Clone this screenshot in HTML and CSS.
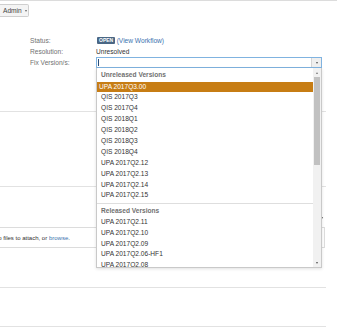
FILE: index.html
```html
<!DOCTYPE html>
<html>
<head>
<meta charset="utf-8">
<link rel="stylesheet" href="styles.css">
</head>
<body>
<div class="page">
  <div class="toolbar">
    <button class="btn">Admin <span class="caret"></span></button>
  </div>
  <div class="fields">
    <div class="row">
      <div class="label">Status:</div>
      <div class="value"><span class="badge">OPEN</span><a class="link">(View Workflow)</a></div>
    </div>
    <div class="row">
      <div class="label">Resolution:</div>
      <div class="value">Unresolved</div>
    </div>
    <div class="row">
      <div class="label">Fix Version/s:</div>
      <div class="value">
        <div class="input">
          <span class="cursor"></span>
          <span class="input-arrow"><span class="tri-down"></span></span>
        </div>
        <div class="dropdown">
          <div class="list">
            <div class="group">
              <div class="group-head">Unreleased Versions</div>
              <div class="item active">UPA 2017Q3.00</div>
              <div class="item">QIS 2017Q3</div>
              <div class="item">QIS 2017Q4</div>
              <div class="item">QIS 2018Q1</div>
              <div class="item">QIS 2018Q2</div>
              <div class="item">QIS 2018Q3</div>
              <div class="item">QIS 2018Q4</div>
              <div class="item">UPA 2017Q2.12</div>
              <div class="item">UPA 2017Q2.13</div>
              <div class="item">UPA 2017Q2.14</div>
              <div class="item">UPA 2017Q2.15</div>
            </div>
            <div class="group group-sep">
              <div class="group-head">Released Versions</div>
              <div class="item">UPA 2017Q2.11</div>
              <div class="item">UPA 2017Q2.10</div>
              <div class="item">UPA 2017Q2.09</div>
              <div class="item">UPA 2017Q2.06-HF1</div>
              <div class="item">UPA 2017Q2.08</div>
            </div>
          </div>
          <div class="scrollbar">
            <div class="sb-btn"><span class="tri-up"></span></div>
            <div class="sb-thumb"></div>
            <div class="sb-track"></div>
            <div class="sb-btn"><span class="tri-down"></span></div>
          </div>
        </div>
      </div>
    </div>
  </div>
  <div class="block b1"></div>
  <div class="block b2"></div>
  <div class="select-row"><span class="tri-down small"></span></div>
  <div class="attach"><span>Drop files to attach, or <a class="link">browse</a>.</span></div>
  <div class="gap"></div>
  <div class="comment"></div>
</div>
</body>
</html>
```
FILE: styles.css
```css
* { box-sizing: border-box; }
body {
  margin: 0;
  font-family: "Liberation Sans", Arial, sans-serif;
  font-size: 6.6px;
  color: #333;
  background: #fff;
}
.page {
  width: 337px;
  height: 332px;
  overflow: hidden;
}
.toolbar {
  border-top: 1px solid #dcdcdc;
  padding-top: 3px;
  height: 35px;
}
.btn {
  height: 13px;
  padding: 0 3px 0 3px;
  border: 1px solid #cfcfcf;
  border-left: none;
  border-radius: 0 2px 2px 0;
  background: #f4f4f4;
  font-family: inherit;
  font-size: 6.6px;
  font-weight: normal;
  color: #444;
  display: inline-flex;
  align-items: center;
  gap: 3px;
  width: 29px;
}
.caret {
  width: 0; height: 0;
  border-left: 1.5px solid transparent;
  border-right: 1.5px solid transparent;
  border-top: 2px solid #666;
}
.fields { display: flex; flex-direction: column; }
.row {
  display: flex;
  height: 11px;
  align-items: center;
  padding-right: 15px;
}
.label {
  width: 96px;
  padding-left: 30px;
  color: #707070;
  flex: none;
}
.value {
  flex: 1;
  position: relative;
  display: flex;
  align-items: center;
  gap: 1.5px;
  height: 11px;
}
.badge {
  background: #4a6785;
  color: #fff;
  font-weight: bold;
  font-size: 5px;
  height: 6.5px;
  line-height: 6.5px;
  padding: 0 2px;
  border-radius: 1px;
  margin-left: 1px;
}
.link { color: #3b73af; }
.input {
  width: 100%;
  height: 11px;
  border: 1px solid #80b3e0;
  display: flex;
  align-items: center;
  background: #fff;
}
.cursor {
  width: 1px;
  height: 7px;
  background: #2a4f7a;
  margin-left: 1px;
}
.input-arrow {
  margin-left: auto;
  width: 10px;
  height: 100%;
  border-left: 1px solid #d5d5d5;
  background: #efefef;
  display: flex;
  align-items: center;
  justify-content: center;
}
.tri-down {
  width: 0; height: 0;
  border-left: 1.5px solid transparent;
  border-right: 1.5px solid transparent;
  border-top: 2px solid #555;
}
.tri-up {
  width: 0; height: 0;
  border-left: 1.5px solid transparent;
  border-right: 1.5px solid transparent;
  border-bottom: 2px solid #777;
}
.dropdown {
  position: absolute;
  top: 11px;
  left: 0;
  right: 0;
  height: 200px;
  border: 1px solid #c9c9c9;
  border-top: none;
  background: #fff;
  display: flex;
  box-shadow: 0 1px 3px rgba(0,0,0,0.12);
  z-index: 5;
}
.list {
  flex: 1;
  overflow: hidden;
}
.group { padding-bottom: 1.5px; }
.group-sep { border-top: 1px solid #dedede; }
.group-head {
  height: 13.5px;
  line-height: 13.5px;
  padding-left: 4px;
  color: #707070;
  font-weight: bold;
}
.group-sep .group-head { height: 13px; line-height: 13px; }
.item {
  height: 10.9px;
  line-height: 10.9px;
  padding-left: 4px;
  white-space: nowrap;
}
.item.active {
  background: #c77d14;
  color: #fff;
  padding-left: 2px;
}
.scrollbar {
  width: 8px;
  background: #f1f1f1;
  display: flex;
  flex-direction: column;
}
.sb-btn {
  height: 9px;
  display: flex;
  align-items: center;
  justify-content: center;
}
.sb-thumb {
  height: 88px;
  margin: 0 1px;
  background: #c1c1c1;
}
.sb-track { flex: 1; }
.block { width: 326px; border-bottom: 1px solid #e2e2e2; }
.b1 { height: 44px; }
.b2 { height: 75px; }
.select-row {
  width: 325px;
  height: 40px;
  display: flex;
  justify-content: flex-end;
  align-items: center;
  padding-right: 2px;
}
.tri-down.small { margin-top: 22px; }
.attach {
  width: 355px;
  margin-left: -30px;
  height: 21px;
  border: 1px solid #dcdcdc;
  display: flex;
  align-items: center;
  padding-left: 17.5px;
  font-size: 6px;
  color: #333;
}
.gap { height: 39px; }
.comment {
  width: 326px;
  height: 40px;
  border-top: 1px solid #e2e2e2;
  border-bottom: 1px solid #e2e2e2;
}
```
